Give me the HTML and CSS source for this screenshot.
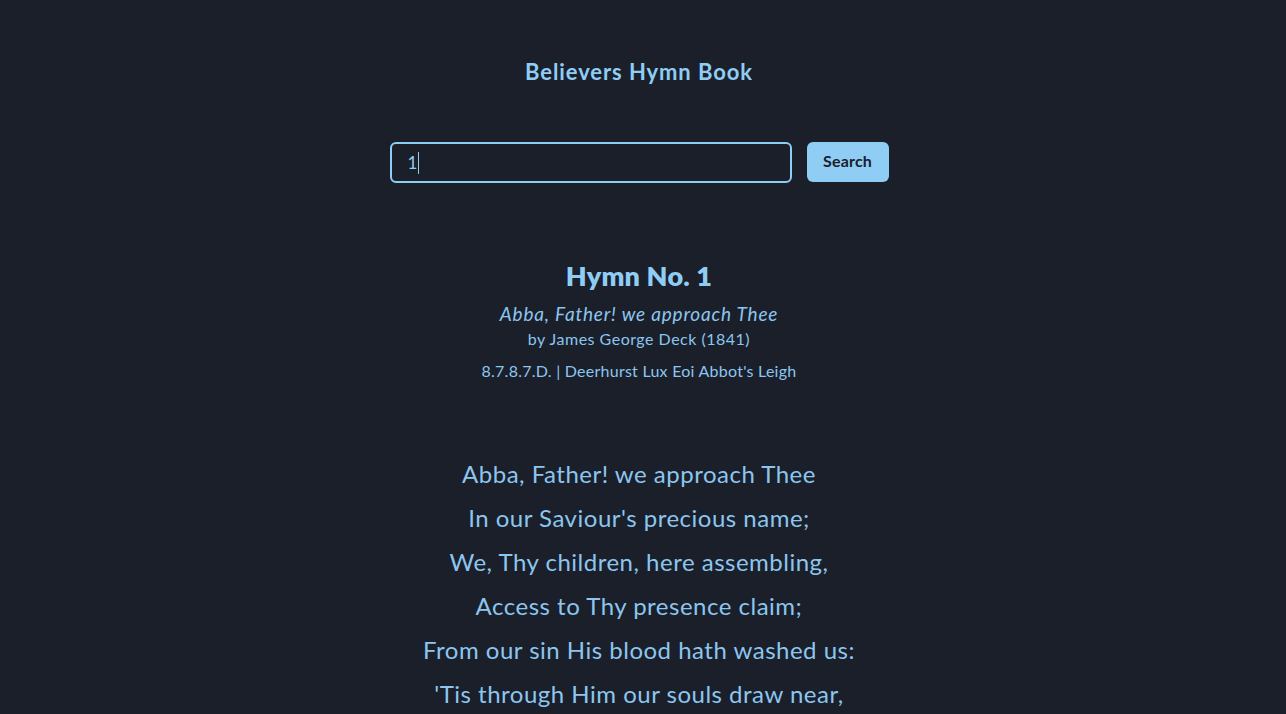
FILE: index.html
```html
<!DOCTYPE html>
<html lang="en">
<head>
<meta charset="utf-8">
<title>Believers Hymn Book</title>
<link rel="stylesheet" href="styles.css">
</head>
<body>
<main class="page">
  <header class="site-header">
    <h1 class="site-title">Believers Hymn Book</h1>
  </header>
  <form class="search">
    <div class="search-input"><span class="search-value">1</span><span class="caret"></span></div>
    <button type="button" class="search-btn">Search</button>
  </form>
  <section class="hymn">
    <h2 class="hymn-no">Hymn No. 1</h2>
    <p class="hymn-first">Abba, Father! we approach Thee</p>
    <p class="hymn-author">by James George Deck (1841)</p>
    <p class="hymn-meter">8.7.8.7.D. | Deerhurst Lux Eoi Abbot's Leigh</p>
    <div class="verse">
      <p>Abba, Father! we approach Thee</p>
      <p>In our Saviour's precious name;</p>
      <p>We, Thy children, here assembling,</p>
      <p>Access to Thy presence claim;</p>
      <p>From our sin His blood hath washed us:</p>
      <p>'Tis through Him our souls draw near,</p>
      <p>And Thy Spirit, too, hath taught us,</p>
      <p>"Abba, Father," Name so dear.</p>
    </div>
  </section>
</main>
</body>
</html>
```
FILE: styles.css
```css
html, body {
  margin: 0;
  padding: 0;
  background: #1a1f2a;
  overflow: hidden;
}
body {
  font-family: Lato, "Noto Sans", sans-serif;
  color: #90cdf4;
}
.page {
  display: flex;
  flex-direction: column;
  align-items: center;
  padding: 0 8px 0 0;
}
.site-header {
  padding-top: 58px;
}
.site-title {
  margin: 0;
  font-size: 22px;
  font-weight: 700;
  line-height: 28px;
  letter-spacing: 0.9px;
  color: #90cdf4;
}
.search {
  display: flex;
  gap: 15px;
  margin-top: 56px;
}
.search-input {
  box-sizing: border-box;
  width: 402px;
  height: 41px;
  border: 2px solid #90cdf4;
  border-radius: 6px;
  display: flex;
  align-items: center;
  padding-left: 16px;
  font-size: 17px;
  color: #90cdf4;
}
.caret {
  display: inline-block;
  width: 1px;
  height: 22px;
  background: #90cdf4;
  margin-left: 1px;
}
.search-btn {
  width: 82px;
  height: 40px;
  border: none;
  border-radius: 6px;
  background: #90cdf4;
  color: #1a202c;
  font-family: inherit;
  font-size: 16px;
  font-weight: 700;
  line-height: 38px;
  padding: 0 0 2px;
  letter-spacing: 0.2px;
  cursor: pointer;
}
.hymn {
  margin-top: 77px;
  text-align: center;
}
.hymn-no {
  margin: 0;
  font-size: 27px;
  font-weight: 800;
  line-height: 32px;
  letter-spacing: 0.2px;
}
.hymn-first {
  margin: 10px 0 0;
  font-size: 19px;
  font-style: italic;
  line-height: 24px;
  letter-spacing: 0.8px;
  color: #8cc6ef;
}
.hymn-author {
  margin: 2px 0 0;
  font-size: 16px;
  line-height: 22px;
  letter-spacing: 0.5px;
  color: #8cc6ef;
}
.hymn-meter {
  margin: 10px 0 0;
  font-size: 16px;
  line-height: 22px;
  letter-spacing: 0.25px;
  color: #8cc6ef;
}
.verse {
  margin-top: 70px;
}
.verse p {
  margin: 0;
  font-size: 24px;
  line-height: 44px;
  letter-spacing: 0.5px;
  color: #8cc6ef;
}
```
